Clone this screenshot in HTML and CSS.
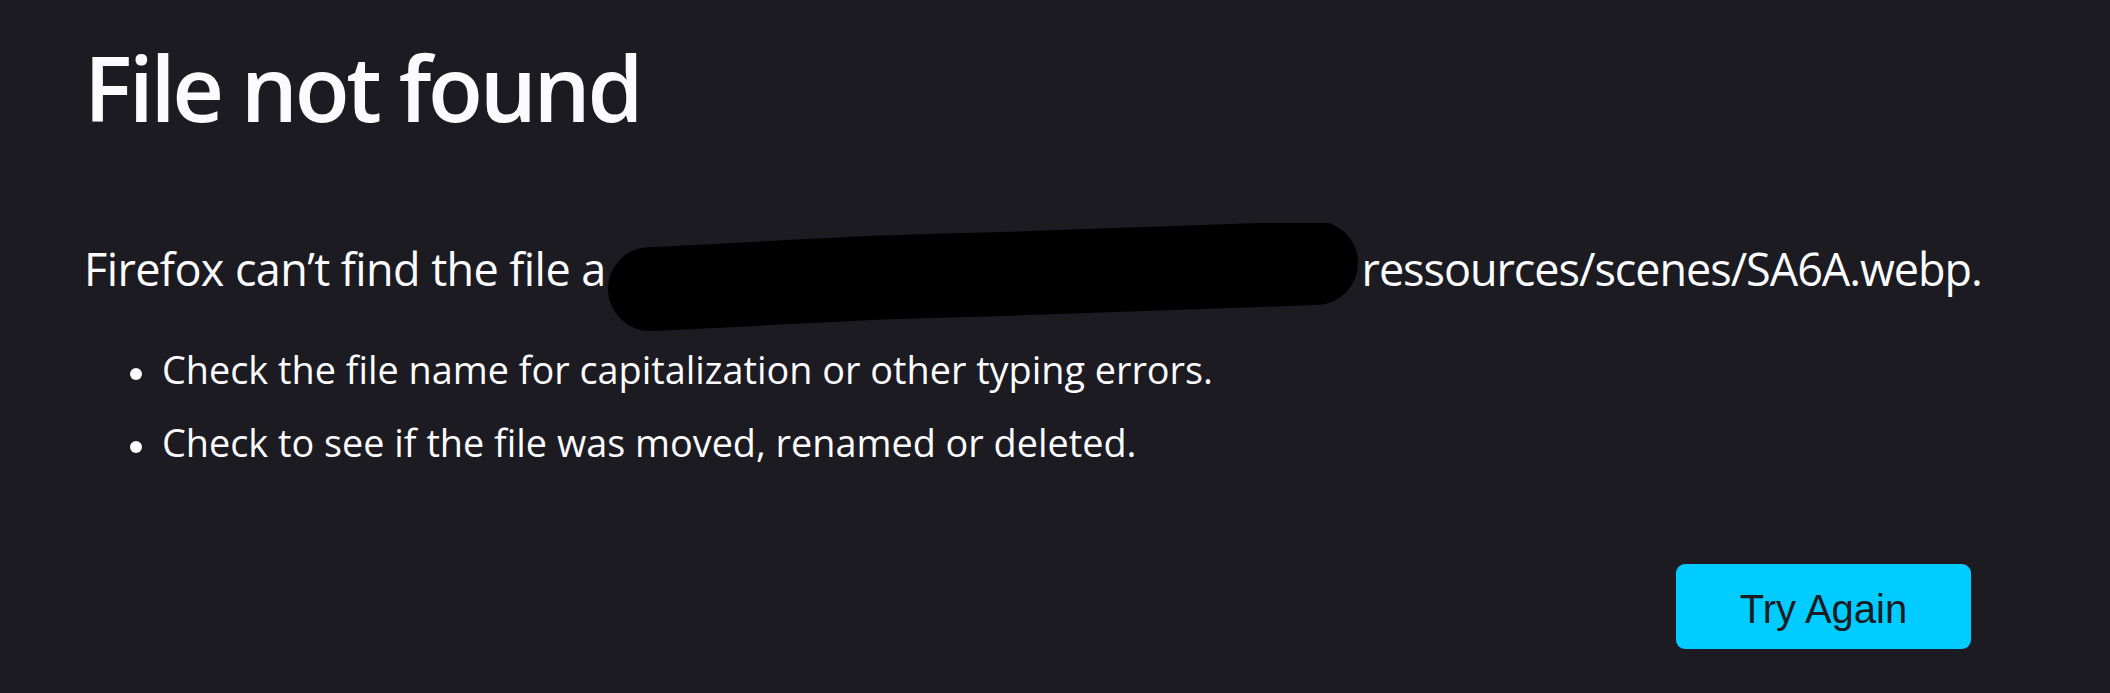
FILE: index.html
```html
<!DOCTYPE html>
<html lang="en">
    <head>
        <meta charset="utf-8">
        <title>Problem loading page</title>
        <link rel="stylesheet" href="styles.css">
    </head>
    <body>

<div class="container">
    <h1 class="title">File not found</h1>

    <p class="short-desc">Firefox can’t find the file a<span class="redact"><svg width="770" height="110" viewBox="0 0 770 110">
        <path d="M50 66 C150 62 220 56 330 53 C450 50 560 46 716 40" fill="none" stroke="#000" stroke-width="84" stroke-linecap="round"/>
    </svg></span><span class="file-path">ressources/scenes/SA6A.webp.</span></p>

    <ul class="long-desc">
        <li>Check the file name for capitalization or other typing errors.</li>
        <li>Check to see if the file was moved, renamed or deleted.</li>
    </ul>

    <div class="actions">
        <button class="primary">Try Again</button>
    </div>
</div>

    </body>
</html>
```

FILE: styles.css
```css
body {
    margin: 0;
    background-color: #1c1b22;
    color: #fbfbfe;
    font-family: "Open Sans", "Noto Sans", sans-serif;
}
.container {
    padding: 33px 84px 0 84px;
}
.title {
    margin: 0;
    font-size: 90px;
    font-weight: 600;
    line-height: 109px;
    letter-spacing: -3.3px;
}
.short-desc {
    margin: 97px 0 0 0;
    font-size: 45px;
    line-height: 60px;
    letter-spacing: -0.6px;
    white-space: nowrap;
}
.file-path {
    letter-spacing: -1.05px;
}
.redact {
    display: inline-block;
    position: relative;
    width: 756px;
    height: 1px;
}
.redact svg {
    position: absolute;
    left: -6px;
    top: -62px;
}
.long-desc {
    list-style: none;
    margin: 34px 0 0 0;
    padding: 0 0 0 78px;
}
.long-desc li {
    font-size: 37.8px;
    line-height: 73px;
}
.long-desc li::before {
    content: "";
    display: inline-block;
    width: 12px;
    height: 12px;
    border-radius: 50%;
    background-color: #fbfbfe;
    margin-left: -32px;
    margin-right: 20px;
    vertical-align: middle;
}
.actions {
    display: flex;
    justify-content: flex-end;
    margin-top: 85px;
    padding-right: 55px;
}
.primary {
    width: 295px;
    height: 85px;
    padding: 5px 0 0 0;
    border: none;
    border-radius: 9px;
    background-color: #00ccff;
    color: #1c1b22;
    font-family: "Liberation Sans", Arial, sans-serif;
    font-size: 40px;
}
```
